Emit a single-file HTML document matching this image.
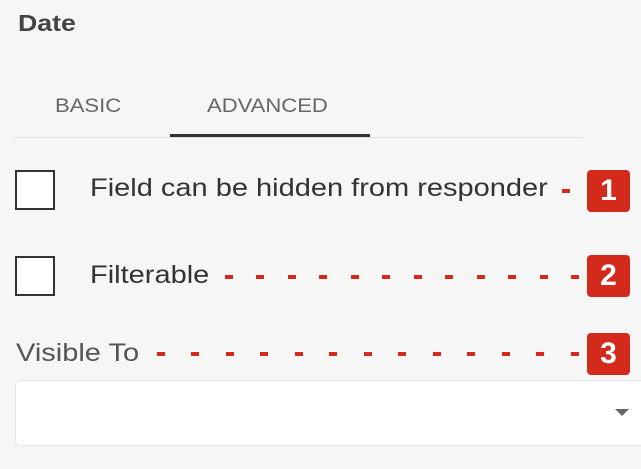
<!DOCTYPE html>
<html><head><style>
body{margin:0;width:641px;height:469px;background:#f6f6f6;position:relative;overflow:hidden;font-family:"Liberation Sans",sans-serif}
.a{position:absolute}
.s{transform:scaleX(1.16);transform-origin:0 0;white-space:nowrap}
.cb{background:#fff;box-sizing:border-box;width:40px;height:40px;border:2.5px solid #333}
.badge{width:43px;height:42px;background:#d42a1c;border-radius:4px;color:#fff;font-weight:bold;font-size:30px;text-align:center;line-height:42px}
.d{position:absolute;height:4px;background:#d42a1c;width:8px}
</style></head><body>
<div class="a s" style="left:18px;top:10px;font-size:23px;font-weight:bold;color:#444">Date</div>
<div class="a s" style="left:55px;top:96px;font-size:19px;color:#666">BASIC</div>
<div class="a s" style="left:207px;top:96px;font-size:19px;color:#666">ADVANCED</div>
<div class="a" style="left:14px;top:137px;width:569px;height:1px;background:#ddd"></div>
<div class="a" style="left:170px;top:134px;width:200px;height:3px;background:#333"></div>

<div class="a cb" style="left:15px;top:170px"></div>
<div class="a s" style="left:90px;top:174px;font-size:25px;color:#333">Field can be hidden from responder</div>
<div class="d" style="left:562px;top:189px"></div>
<div class="a badge" style="left:587px;top:170px">1</div>

<div class="a cb" style="left:15px;top:256px"></div>
<div class="a s" style="left:90px;top:261px;font-size:25px;color:#333">Filterable</div>
<div class="a badge" style="left:587px;top:255px">2</div>

<div class="a s" style="left:16px;top:339px;font-size:25px;color:#555">Visible To</div>
<div class="a badge" style="left:587px;top:333px">3</div>

<div class="a" style="left:15px;top:380px;width:640px;height:66px;background:#fff;border:1px solid #e4e4e4;border-radius:5px;box-sizing:border-box"></div>
<div class="a" style="left:615px;top:409px;width:0;height:0;border-left:7px solid transparent;border-right:7px solid transparent;border-top:7px solid #666"></div>

<div class="d" style="left:225px;top:275px"></div><div class="d" style="left:256px;top:275px"></div><div class="d" style="left:288px;top:275px"></div><div class="d" style="left:319px;top:275px"></div><div class="d" style="left:351px;top:275px"></div><div class="d" style="left:382px;top:275px"></div><div class="d" style="left:414px;top:275px"></div><div class="d" style="left:445px;top:275px"></div><div class="d" style="left:477px;top:275px"></div><div class="d" style="left:508px;top:275px"></div><div class="d" style="left:540px;top:275px"></div><div class="d" style="left:571px;top:275px"></div>
<div class="d" style="left:157px;top:352px"></div><div class="d" style="left:191px;top:352px"></div><div class="d" style="left:226px;top:352px"></div><div class="d" style="left:260px;top:352px"></div><div class="d" style="left:295px;top:352px"></div><div class="d" style="left:329px;top:352px"></div><div class="d" style="left:364px;top:352px"></div><div class="d" style="left:398px;top:352px"></div><div class="d" style="left:433px;top:352px"></div><div class="d" style="left:467px;top:352px"></div><div class="d" style="left:502px;top:352px"></div><div class="d" style="left:536px;top:352px"></div><div class="d" style="left:571px;top:352px"></div>
</body></html>
